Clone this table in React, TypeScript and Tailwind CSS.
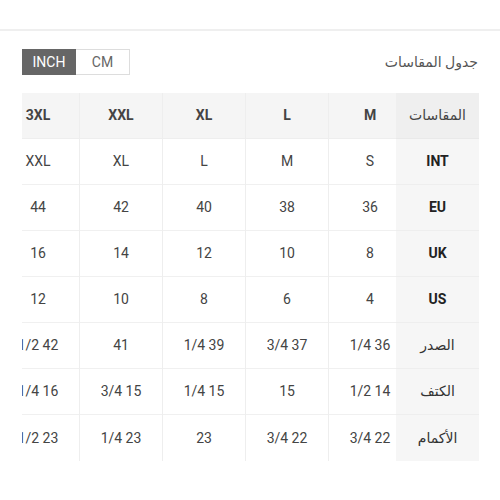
import React from 'react';

const columns = [
  { head: 'M', cells: ['S', '36', '8', '4', '1/4 36', '1/2 14', '3/4 22'] },
  { head: 'L', cells: ['M', '38', '10', '6', '3/4 37', '15', '3/4 22'] },
  { head: 'XL', cells: ['L', '40', '12', '8', '1/4 39', '1/4 15', '23'] },
  { head: 'XXL', cells: ['XL', '42', '14', '10', '41', '3/4 15', '1/4 23'] },
  { head: '3XL', cells: ['XXL', '44', '16', '12', '1/2 42', '1/4 16', '1/2 23'] },
];

const labels = [
  { text: 'INT', bold: true },
  { text: 'EU', bold: true },
  { text: 'UK', bold: true },
  { text: 'US', bold: true },
  { text: 'الصدر', bold: false },
  { text: 'الكتف', bold: false },
  { text: 'الأكمام', bold: false },
];

const App: React.FC = () => {
  return (
    <div className="w-[500px] h-[500px] bg-white font-['Roboto','DejaVu_Sans',sans-serif] pt-[29px]">
      {/* Divider */}
      <div className="h-[2px] bg-[#efefef]" />

      {/* Unit toggle + title */}
      <div className="flex justify-between px-[22px] pt-[18px] h-[64px] items-start">
        <div className="flex h-[26px]">
          <div className="w-[54px] h-[26px] bg-[#666666] text-white text-[14px] flex items-center justify-center">
            INCH
          </div>
          <div className="w-[54px] h-[26px] border border-l-0 border-[#dddddd] text-[#666666] text-[14px] flex items-center justify-center">
            CM
          </div>
        </div>
        <div dir="rtl" className="text-[14px] text-[#555555] leading-[26px]">
          جدول المقاسات
        </div>
      </div>

      {/* Size table */}
      <div dir="rtl" className="flex mr-[21px] ml-[22px] mt-[-2px]">
        {/* Label column */}
        <div className="w-[83px] shrink-0 flex flex-col">
          <div className="h-[46px] bg-[#efefef] flex items-center justify-center text-[14px] text-[#444444] border-b border-[#e9e9e9]">
            المقاسات
          </div>
          {labels.map((l, i) => (
            <div
              key={i}
              className={`h-[46px] bg-[#f6f6f6] flex items-center justify-center text-[14px] border-b border-[#eeeeee] last:border-b-0 ${
                l.bold ? 'font-bold text-[#222222]' : 'text-[#333333]'
              }`}
            >
              {l.text}
            </div>
          ))}
        </div>

        {/* Data columns */}
        <div className="flex-1 overflow-hidden">
          <div className="flex mr-[-15px]">
            {columns.map((c, ci) => (
              <div key={ci} className="w-[83px] shrink-0 flex flex-col border-l border-[#eeeeee]">
                <div className="h-[46px] bg-[#f5f5f5] flex items-center justify-center text-[14px] font-bold text-[#444444] border-b border-[#eeeeee]">
                  {c.head}
                </div>
                {c.cells.map((v, vi) => (
                  <div
                    key={vi}
                    dir="ltr"
                    className="h-[46px] flex items-center justify-center text-[14px] text-[#444444] border-b border-[#f0f0f0] last:border-b-0 whitespace-nowrap"
                  >
                    {v}
                  </div>
                ))}
              </div>
            ))}
          </div>
        </div>
      </div>
    </div>
  );
};

export default App;
